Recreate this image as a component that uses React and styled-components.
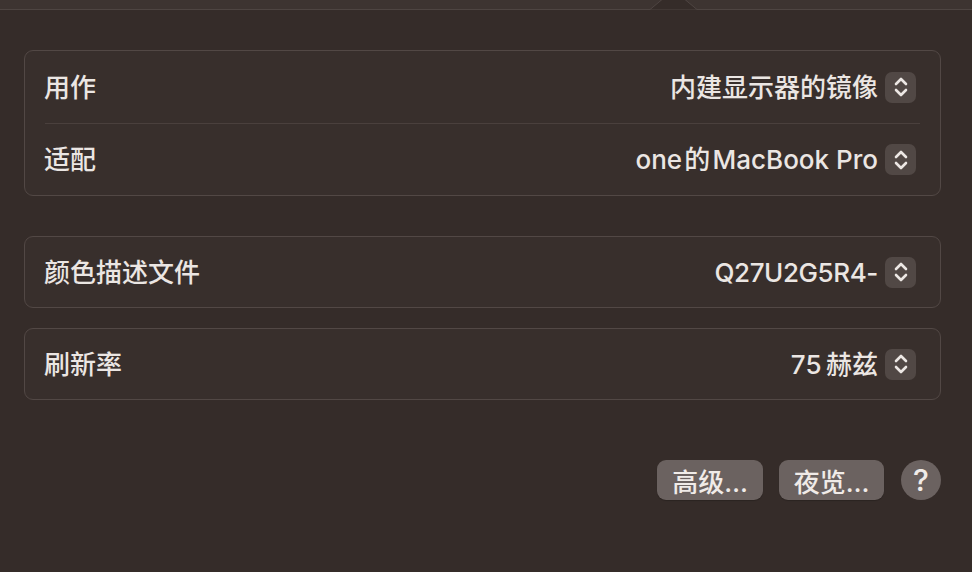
import React from "react";
import styled, { createGlobalStyle } from "styled-components";

const Global = createGlobalStyle`
  html, body { margin: 0; padding: 0; background: #352c29; }
  body { width: 972px; height: 572px; overflow: hidden; }
  * { box-sizing: border-box; }
`;

const Page = styled.div`
  position: relative;
  width: 972px;
  height: 572px;
  background: #352c29;
  font-family: "Inter", "Noto Sans CJK SC", sans-serif;
  color: #ebe6e3;
  display: flex;
  flex-direction: column;
`;

const TopStrip = styled.div`
  height: 10px;
  background: #3d3431;
  border-bottom: 1px solid #4e4542;
  flex-shrink: 0;
`;

const Arrow = styled.svg`
  position: absolute;
  left: 640px;
  top: -10px;
`;

const Content = styled.div`
  display: flex;
  flex-direction: column;
  padding: 40px 31px 0 24px;
`;

const Card = styled.div`
  border: 1px solid #524845;
  border-radius: 9px;
  background: #382f2c;
  padding: 0 20px 0 19px;
  margin-top: ${(p) => p.$mt || 0}px;
`;

const Row = styled.div`
  display: flex;
  align-items: center;
  justify-content: space-between;
  height: ${(p) => p.$h || 70}px;
  padding-right: 4px;
`;

const Sep = styled.div`
  height: 1px;
  background: #4a403d;
  margin-left: 1px;
`;

const Label = styled.span`
  font-size: 26px;
  font-weight: 500;
  line-height: 1;
  padding-top: 1px;
`;

const Value = styled.div`
  display: flex;
  align-items: center;
  gap: 7px;
  font-size: 26px;
  font-weight: 500;
  line-height: 1;
  letter-spacing: ${(p) => p.$ls || 0}px;
`;

const ValueText = styled.span`
  padding-top: 1px;
`;

const Stepper = styled.div`
  width: 31px;
  height: 31px;
  border-radius: 7px;
  background: #514845;
  display: flex;
  align-items: center;
  justify-content: center;
`;

const Footer = styled.div`
  display: flex;
  justify-content: flex-end;
  align-items: center;
  gap: 16px;
  margin-top: 60px;
`;

const Button = styled.button`
  width: ${(p) => p.$w}px;
  height: 40px;
  padding: 0;
  border: none;
  border-radius: 9px;
  background: #6b6260;
  color: #f0ebe8;
  font-family: "Inter", "Noto Sans CJK SC", sans-serif;
  font-size: 26px;
  font-weight: 500;
  display: flex;
  align-items: center;
  justify-content: center;
  box-shadow: 0 1px 1px rgba(0,0,0,0.2);
`;

const Help = styled.button`
  width: 40px;
  height: 40px;
  margin-left: 1px;
  border: none;
  border-radius: 50%;
  background: #6b6260;
  color: #f0ebe8;
  font-family: "Inter", sans-serif;
  font-size: 30px;
  font-weight: 500;
  display: flex;
  align-items: center;
  justify-content: center;
  padding: 0;
`;

const Chevrons = () => (
  <svg width="18" height="24" viewBox="0 0 18 24" fill="none">
    <path d="M4 9 L9 4 L14 9" stroke="#ece7e4" strokeWidth="2.6" strokeLinecap="round" strokeLinejoin="round" />
    <path d="M4 15 L9 20 L14 15" stroke="#ece7e4" strokeWidth="2.6" strokeLinecap="round" strokeLinejoin="round" />
  </svg>
);

const Select = ({ children, ls }) => (
  <Value $ls={ls}>
    <ValueText>{children}</ValueText>
    <Stepper><Chevrons /></Stepper>
  </Value>
);

export default function App() {
  return (
    <Page>
      <Global />
      <TopStrip />
      <Arrow width="68" height="22" viewBox="0 0 68 22">
        <path d="M0 19.5 L10 19.5 L33.5 0 L57 19.5 L68 19.5 Z" fill="#352c29" />
        <path d="M10 19.5 L33.5 0 L57 19.5" fill="none" stroke="#4e4542" strokeWidth="1" />
      </Arrow>
      <Content>
        <Card>
          <Row $h={72}>
            <Label>用作</Label>
            <Select>内建显示器的镜像</Select>
          </Row>
          <Sep />
          <Row $h={71}>
            <Label>适配</Label>
            <Select>one&#8202;的&#8202;MacBook Pro</Select>
          </Row>
        </Card>
        <Card $mt={40}>
          <Row>
            <Label>颜色描述文件</Label>
            <Select ls={-0.4}>Q27U2G5R4-</Select>
          </Row>
        </Card>
        <Card $mt={20}>
          <Row>
            <Label>刷新率</Label>
            <Select>75&#8201;赫兹</Select>
          </Row>
        </Card>
        <Footer>
          <Button $w={106}>高级…</Button>
          <Button $w={105}>夜览…</Button>
          <Help>?</Help>
        </Footer>
      </Content>
    </Page>
  );
}
